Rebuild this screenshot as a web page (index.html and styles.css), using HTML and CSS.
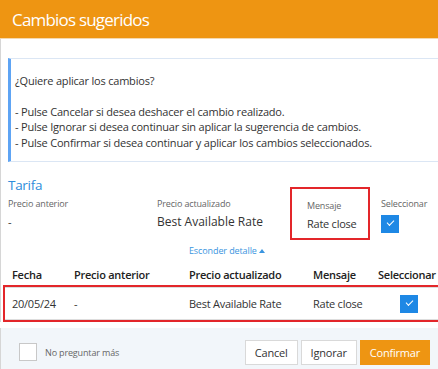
FILE: index.html
```html
<!DOCTYPE html>
<html lang="es">
<head>
    <meta charset="UTF-8">
    <title>Cambios sugeridos</title>
    <link rel="stylesheet" href="styles.css">
</head>
<body>
    <div class="modal">
        <div class="modal-header">Cambios sugeridos</div>

        <div class="modal-body">
            <div class="info-box">
                <p>¿Quiere aplicar los cambios?</p>
                <p>- Pulse Cancelar si desea deshacer el cambio realizado.<br>
                - Pulse Ignorar si desea continuar sin aplicar la sugerencia de cambios.<br>
                - Pulse Confirmar si desea continuar y aplicar los cambios seleccionados.</p>
            </div>

            <h2 class="section-title">Tarifa</h2>
            <div class="detail">
                <div class="detail-col col-old">
                    <span class="label">Precio anterior</span>
                    <span class="value">-</span>
                </div>
                <div class="detail-col col-new">
                    <span class="label">Precio actualizado</span>
                    <span class="value value-big">Best Available Rate</span>
                </div>
                <div class="detail-col col-msg">
                    <span class="label">Mensaje</span>
                    <span class="value">Rate close</span>
                </div>
                <div class="detail-col col-sel">
                    <span class="label">Seleccionar</span>
                    <span class="check checked"></span>
                </div>
            </div>
            <div class="toggle">Esconder detalle <span class="caret"></span></div>

            <div class="grid-table">
                <div class="grid-row grid-head">
                    <span>Fecha</span>
                    <span>Precio anterior</span>
                    <span>Precio actualizado</span>
                    <span>Mensaje</span>
                    <span>Seleccionar</span>
                </div>
                <div class="grid-row grid-item">
                    <span>20/05/24</span>
                    <span>-</span>
                    <span>Best Available Rate</span>
                    <span>Rate close</span>
                    <span class="cell-check"><span class="check checked"></span></span>
                </div>
            </div>
        </div>

        <div class="modal-footer">
            <label class="dont-ask"><span class="check"></span>No preguntar más</label>
            <div class="buttons">
                <button class="btn">Cancel</button>
                <button class="btn">Ignorar</button>
                <button class="btn btn-primary">Confirmar</button>
            </div>
        </div>
    </div>
</body>
</html>
```

FILE: styles.css
```css
* {
    box-sizing: border-box;
}

body {
    margin: 0;
    font-family: "Open Sans", Arial, sans-serif;
    color: #333;
    background: #fff;
    overflow: hidden;
}

.modal {
    width: 450px;
    height: 369px;
    display: flex;
    flex-direction: column;
}

.modal-header {
    background-color: #ee9512;
    color: #fff;
    font-size: 17px;
    letter-spacing: -0.8px;
    height: 42px;
    padding: 8px 12px 0;
    border-bottom: 1px solid #f4d9b0;
}

.modal-body {
    flex: 1;
    border-left: 1px solid #d6d6d6;
    padding: 19px 0 0 7px;
}

.info-box {
    border: 1px solid #dbe6f4;
    border-left: 3px solid #5ea4f4;
    padding: 14px 10px 11px 4px;
    font-size: 11px;
    letter-spacing: -0.2px;
    line-height: 15.5px;
    color: #333;
}

.info-box p {
    margin: 0 0 15px;
}

.info-box p:last-child {
    margin: 0;
}

.section-title {
    margin: 13px 0 0;
    font-size: 13.5px;
    letter-spacing: -0.3px;
    font-weight: normal;
    color: #2f8ddb;
    line-height: 20px;
}

.detail {
    display: flex;
    align-items: flex-start;
    margin-top: 2px;
}

.detail-col {
    display: flex;
    flex-direction: column;
}

.col-old {
    width: 149px;
}

.col-new {
    width: 133px;
}

.col-msg {
    width: 80px;
    height: 53px;
    margin-top: -10px;
    padding: 10px 0 0 15px;
    border: 2px solid #e3262a;
    margin-right: 11px;
}

.label {
    font-size: 9px;
    letter-spacing: -0.15px;
    color: #666;
    line-height: 14px;
}

.value {
    font-size: 11px;
    letter-spacing: -0.25px;
    line-height: 20px;
    color: #333;
    padding-top: 1px;
}

.value-big {
    font-size: 12px;
    letter-spacing: 0;
}

.check {
    display: inline-block;
    width: 18px;
    height: 18px;
    border: 1px solid #c8c8c8;
    background: #fff;
    position: relative;
}

.col-sel .check {
    margin-top: 4px;
}

.check.checked {
    background: #1e88e5;
    border-color: #1e88e5;
}

.check.checked::after {
    content: "";
    position: absolute;
    left: 5px;
    top: 4px;
    width: 6px;
    height: 3px;
    border-left: 1.5px solid #fff;
    border-bottom: 1.5px solid #fff;
    transform: rotate(-45deg);
}

.toggle {
    text-align: center;
    font-size: 9px;
    letter-spacing: -0.1px;
    color: #3a95e0;
    margin: 4px 0 0 -4px;
    line-height: 14px;
}

.caret {
    display: inline-block;
    width: 0;
    height: 0;
    border-left: 3.5px solid transparent;
    border-right: 3.5px solid transparent;
    border-bottom: 4px solid #3a95e0;
    vertical-align: 1px;
}

.grid-table {
    margin: 5px 0 0 -5px;
    font-size: 11px;
    letter-spacing: -0.25px;
}

.grid-row {
    display: grid;
    grid-template-columns: 62px 115px 124px 65px 80px;
    align-items: center;
}

.grid-row span {
    white-space: nowrap;
}

.grid-head {
    font-weight: 600;
    color: #222;
    padding: 0 0 0 9px;
    height: 22px;
}

.grid-item {
    border: 2px solid #e3262a;
    height: 37px;
    padding-left: 7px;
    color: #333;
    box-shadow: inset 0 1px 0 #ddd, inset 0 -1px 0 #ddd;
}

.cell-check {
    padding-left: 22px;
    display: flex;
}

.modal-footer {
    height: 43px;
    background: #f2f6fa;
    display: flex;
    align-items: flex-start;
    justify-content: space-between;
    padding: 12px 20px 0 18px;
    border-left: 1px solid #d6d6d6;
    margin-top: 6px;
}

.dont-ask {
    display: flex;
    align-items: center;
    font-size: 9px;
    letter-spacing: -0.15px;
    color: #666;
    margin-top: 3px;
}

.dont-ask .check {
    margin-right: 8px;
}

.buttons {
    display: flex;
    gap: 3px;
}

.btn {
    font-family: "Open Sans", Arial, sans-serif;
    font-size: 11px;
    letter-spacing: -0.2px;
    height: 25px;
    padding: 0 9px;
    border: 1px solid #d9d9d9;
    background: #fff;
    color: #333;
}

.btn-primary {
    background: #ee9512;
    border-color: #ee9512;
    color: #fff;
}
```
